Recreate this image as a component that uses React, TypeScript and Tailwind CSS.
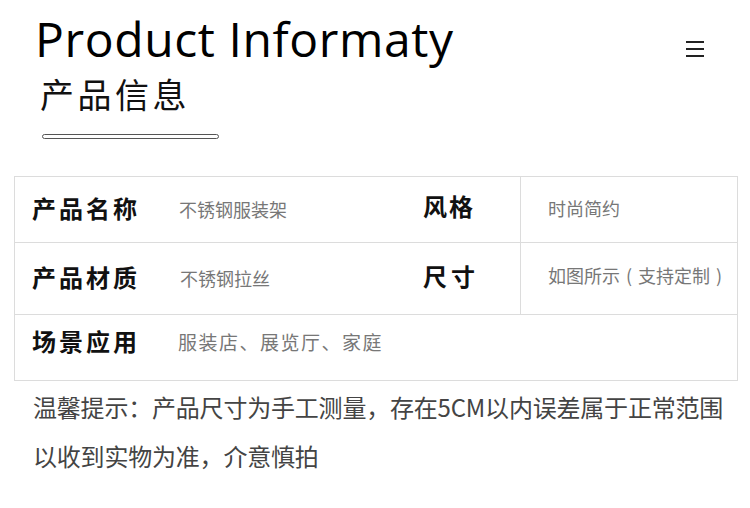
import React from "react";

const cjk = '"Noto Sans CJK SC", "Noto Sans", sans-serif';

export default function App() {
  return (
    <div className="w-[750px] h-[508px] bg-white overflow-hidden relative" style={{ fontFamily: cjk }}>
      <div className="flex justify-between">
        <div className="pl-[35px] pt-[7px]">
          <div className="text-[48px] leading-[64px] tracking-[0.6px] text-black" style={{ fontFamily: '"Open Sans", sans-serif' }}>
            Product Informaty
          </div>
          <div className="pl-[5px] pt-[1px] text-[34px] leading-[44px] tracking-[3.5px] text-[#111]">产品信息</div>
          <div className="ml-[7px] mt-[18px] w-[177px] h-[5px] rounded-full border-[1.5px] border-[#555]" />
        </div>
        <div className="pt-[41px] pr-[46px] flex flex-col gap-[5px]">
          <div className="w-[18px] h-[2px] bg-[#222]" />
          <div className="w-[18px] h-[2px] bg-[#222]" />
          <div className="w-[18px] h-[2px] bg-[#222]" />
        </div>
      </div>

      <div className="mt-[37px] ml-[14px] w-[724px] border border-[#dcdcdc]">
        <div className="flex h-[66px] border-b border-[#dcdcdc]">
          <div className="w-[505px] flex items-center pl-[17px]">
            <div className="w-[147px] mb-[4px] text-[24px] font-bold tracking-[3px] text-[#111]">产品名称</div>
            <div className="w-[244px] text-[18px] text-[#777]">不锈钢服装架</div>
            <div className="mb-[8px] text-[24px] font-bold tracking-[2px] text-[#111]">风格</div>
          </div>
          <div className="flex-1 border-l border-[#dcdcdc] flex items-center pl-[27px] pb-[2px] text-[18px] text-[#777]">时尚简约</div>
        </div>
        <div className="flex h-[72px] border-b border-[#dcdcdc]">
          <div className="w-[505px] flex items-center pl-[17px]">
            <div className="w-[148px] mb-[4px] text-[24px] font-bold tracking-[3px] text-[#111]">产品材质</div>
            <div className="w-[243px] text-[18px] text-[#777]">不锈钢拉丝</div>
            <div className="mb-[6px] text-[24px] font-bold tracking-[4px] text-[#111]">尺寸</div>
          </div>
          <div className="flex-1 border-l border-[#dcdcdc] flex items-center pl-[27px] pb-[6px] text-[18px] text-[#777]">
            如图所示<span className="mx-[6px]">(</span>支持定制<span className="mx-[6px]">)</span>
          </div>
        </div>
        <div className="flex h-[65px] items-center pl-[17px] pb-[10px]">
          <div className="w-[146px] mb-[4px] text-[24px] font-bold tracking-[3px] text-[#111]">场景应用</div>
          <div className="text-[19px] text-[#777] tracking-[1.5px]">服装店、展览厅、家庭</div>
        </div>
      </div>

      <div className="pl-[33px] pt-[1px] text-[24px] leading-[49px] tracking-[-0.2px] text-[#444]">
        <div>温馨提示：产品尺寸为手工测量，存在5CM以内误差属于正常范围</div>
        <div>以收到实物为准，介意慎拍</div>
      </div>
    </div>
  );
}
